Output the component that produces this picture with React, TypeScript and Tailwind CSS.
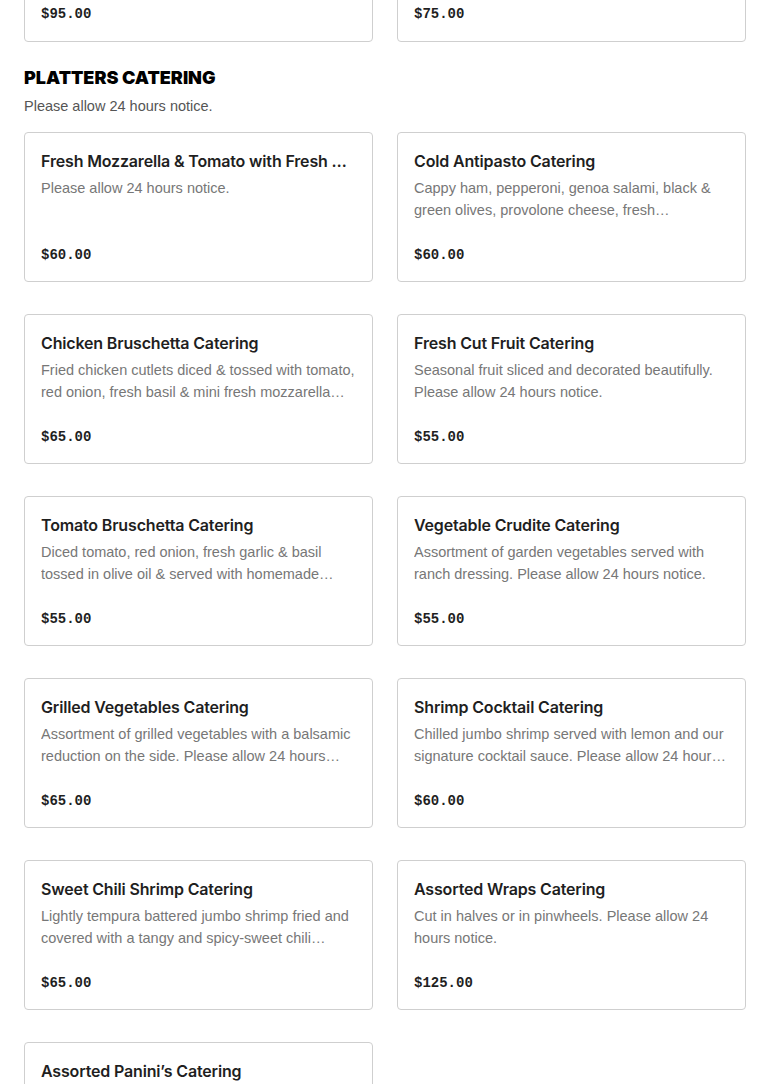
import type { ReactNode } from "react";

type Item = { name: string; desc: string; price: string };

const items: Item[] = [
  { name: "Fresh Mozzarella & Tomato with Fresh Basil Catering", desc: "Please allow 24 hours notice.", price: "$60.00" },
  { name: "Cold Antipasto Catering", desc: "Cappy ham, pepperoni, genoa salami, black & green olives, provolone cheese, fresh mozzarella, roasted peppers. Please allow 24 hours notice.", price: "$60.00" },
  { name: "Chicken Bruschetta Catering", desc: "Fried chicken cutlets diced & tossed with tomato, red onion, fresh basil & mini fresh mozzarella balls. Please allow 24 hours notice.", price: "$65.00" },
  { name: "Fresh Cut Fruit Catering", desc: "Seasonal fruit sliced and decorated beautifully. Please allow 24 hours notice.", price: "$55.00" },
  { name: "Tomato Bruschetta Catering", desc: "Diced tomato, red onion, fresh garlic & basil tossed in olive oil & served with homemade garlic toast. Please allow 24 hours notice.", price: "$55.00" },
  { name: "Vegetable Crudite Catering", desc: "Assortment of garden vegetables served with ranch dressing. Please allow 24 hours notice.", price: "$55.00" },
  { name: "Grilled Vegetables Catering", desc: "Assortment of grilled vegetables with a balsamic reduction on the side. Please allow 24 hours notice.", price: "$65.00" },
  { name: "Shrimp Cocktail Catering", desc: "Chilled jumbo shrimp served with lemon and our signature cocktail sauce. Please allow 24 hours notice.", price: "$60.00" },
  { name: "Sweet Chili Shrimp Catering", desc: "Lightly tempura battered jumbo shrimp fried and covered with a tangy and spicy-sweet chili sauce. Please allow 24 hours notice.", price: "$65.00" },
  { name: "Assorted Wraps Catering", desc: "Cut in halves or in pinwheels. Please allow 24 hours notice.", price: "$125.00" },
  { name: "Assorted Panini’s Catering", desc: "Please allow 24 hours notice.", price: "$75.00" },
];

const body = "font-['Liberation_Sans','Noto_Sans',sans-serif]";

function Price({ children }: { children: ReactNode }) {
  return (
    <div className="font-['Liberation_Mono',monospace] text-[14px] font-bold leading-5 text-[#1f1f1f]">
      {children}
    </div>
  );
}

function Card({ item }: { item: Item }) {
  return (
    <div className="flex h-[150px] flex-col rounded-[4px] border border-[#cfcfcf] bg-white px-4 pt-4 pb-4">
      <div className="truncate font-['Inter',sans-serif] text-[16px] font-semibold leading-6 tracking-[-0.01em] text-[#1f1f1f]">
        {item.name}
      </div>
      <p className={`mt-1 line-clamp-2 text-[14.5px] leading-[22px] text-[#777] ${body}`}>{item.desc}</p>
      <div className="mt-auto">
        <Price>{item.price}</Price>
      </div>
    </div>
  );
}

export default function App() {
  return (
    <div className="min-h-screen bg-white px-6">
      <div className="-mt-[108px] grid grid-cols-2 gap-6">
        <div className="flex h-[150px] flex-col justify-end rounded-[4px] border border-[#cfcfcf] px-4 pb-[17px]">
          <Price>$95.00</Price>
        </div>
        <div className="flex h-[150px] flex-col justify-end rounded-[4px] border border-[#cfcfcf] px-4 pb-[17px]">
          <Price>$75.00</Price>
        </div>
      </div>

      <h2 className="mt-[25px] font-['Inter',sans-serif] text-[18px] font-black uppercase leading-[22px] text-black">
        Platters Catering
      </h2>
      <p className={`mt-[7px] text-[14.5px] leading-5 text-[#555] ${body}`}>Please allow 24 hours notice.</p>

      <div className="mt-4 grid grid-cols-2 gap-x-6 gap-y-8 pb-10">
        {items.map((it) => (
          <Card key={it.name} item={it} />
        ))}
      </div>
    </div>
  );
}
